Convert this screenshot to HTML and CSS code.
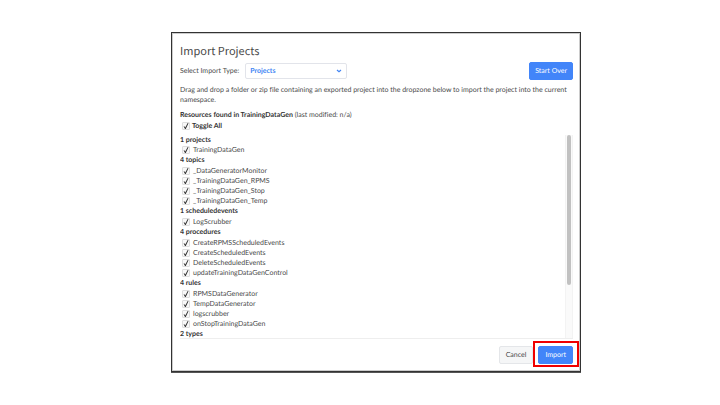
FILE: index.html
```html
<!DOCTYPE html>
<html lang="en">
<head>
<meta charset="utf-8">
<title>Import Projects</title>
<link rel="stylesheet" href="styles.css">
</head>
<body>
<main class="dialog">
  <h1 class="title">Import Projects</h1>
  <div class="toolbar">
    <label class="type-label" for="import-type">Select Import Type:</label>
    <div class="select-box">
      <select id="import-type" class="select"><option>Projects</option></select>
      <svg class="chevron" viewBox="0 0 6 4" aria-hidden="true"><path d="M1 1l2 1.8L5 1"/></svg>
    </div>
    <button class="button primary start-over" type="button">Start Over</button>
  </div>
  <p class="help">Drag and drop a folder or zip file containing an exported project into the dropzone below to import the project into the current namespace.</p>
  <p class="found"><strong>Resources found in TrainingDataGen</strong> (last modified: n/a)</p>
  <label class="item toggle-all"><input type="checkbox" checked>Toggle All</label>
  <div class="scroll-area">
    <div class="resources">
      <h2 class="group">1 projects</h2>
      <label class="item"><input type="checkbox" checked>TrainingDataGen</label>
      <h2 class="group">4 topics</h2>
      <label class="item"><input type="checkbox" checked>_DataGeneratorMonitor</label>
      <label class="item"><input type="checkbox" checked>_TrainingDataGen_RPMS</label>
      <label class="item"><input type="checkbox" checked>_TrainingDataGen_Stop</label>
      <label class="item"><input type="checkbox" checked>_TrainingDataGen_Temp</label>
      <h2 class="group">1 scheduledevents</h2>
      <label class="item"><input type="checkbox" checked>LogScrubber</label>
      <h2 class="group">4 procedures</h2>
      <label class="item"><input type="checkbox" checked>CreateRPMSScheduledEvents</label>
      <label class="item"><input type="checkbox" checked>CreateScheduledEvents</label>
      <label class="item"><input type="checkbox" checked>DeleteScheduledEvents</label>
      <label class="item"><input type="checkbox" checked>updateTrainingDataGenControl</label>
      <h2 class="group">4 rules</h2>
      <label class="item"><input type="checkbox" checked>RPMSDataGenerator</label>
      <label class="item"><input type="checkbox" checked>TempDataGenerator</label>
      <label class="item"><input type="checkbox" checked>logscrubber</label>
      <label class="item"><input type="checkbox" checked>onStopTrainingDataGen</label>
      <h2 class="group">2 types</h2>
    </div>
    <div class="track" aria-hidden="true"><div class="thumb"></div></div>
  </div>
  <footer class="actions">
    <button class="button cancel" type="button">Cancel</button>
    <span class="highlight"><button class="button primary" type="button">Import</button></span>
  </footer>
</main>
</body>
</html>
```
FILE: styles.css
```css
* {
  box-sizing: border-box;
}

body {
  margin: 0;
  padding: 32px 139px 32px 171px;
  background: #fff;
  color: #4a4a4a;
  font: 7px/10px Lato, "Noto Sans", sans-serif;
  font-variant-ligatures: none;
  text-rendering: geometricPrecision;
}

.dialog {
  display: flex;
  flex-direction: column;
  padding: 10px 7px 4px 8px;
  border: 1px solid #333;
  box-shadow: 0 1px 0 #555, inset 0 0 0 1px #ccc;
}

.title {
  margin: 0;
  font-family: "Noto Sans CJK SC", "Noto Sans", sans-serif;
  font-size: 11px;
  font-weight: 400;
  line-height: 16px;
}

.toolbar {
  display: flex;
  align-items: center;
  margin-top: 3px;
}

.type-label {
  margin-right: 6px;
}

.select-box {
  position: relative;
  width: 102px;
}

.select {
  appearance: none;
  display: block;
  width: 100%;
  height: 16px;
  padding: 0 4px;
  border: 1px solid #e2e4ea;
  border-radius: 2px;
  background: #fff;
  color: #4285f4;
  font: inherit;
  font-weight: 700;
  text-rendering: inherit;
}

.chevron {
  position: absolute;
  top: 6px;
  right: 5px;
  width: 6px;
  height: 4px;
  fill: none;
  stroke: #4285f4;
  stroke-width: 1.2;
  pointer-events: none;
}

.button {
  height: 18px;
  padding: 0 6px;
  border: 1px solid #e4e6e9;
  border-radius: 2px;
  background: #f5f6f7;
  color: #4a4a4a;
  font: inherit;
  text-rendering: inherit;
  white-space: nowrap;
}

.primary {
  border-color: #4285f9;
  background: #4285f9;
  color: #fff;
}

.start-over {
  margin-left: auto;
  padding: 0 5px;
}

.help,
.found {
  margin: 5px 0 0;
}

strong,
.group,
.toggle-all {
  color: #333;
  font-weight: 700;
}

.item {
  display: flex;
  align-items: center;
  gap: 3px;
  height: 10px;
  padding-left: 2px;
}

.toggle-all {
  gap: 2px;
  margin-top: 1px;
}

.item input {
  appearance: none;
  width: 8px;
  height: 8px;
  margin: 0;
  border: 1px solid #ddd;
  border-radius: 1px;
  background: #f8f8f8;
}

.item input:checked::before {
  content: "";
  display: block;
  width: 6px;
  height: 6px;
  background: #333;
  clip-path: polygon(10% 60%, 22% 54%, 38% 74%, 78% 0, 92% 6%, 46% 100%, 34% 100%);
}

.scroll-area {
  display: flex;
  height: 204px;
  margin-top: 4px;
  border-bottom: 1px solid #eee;
}

.resources {
  flex: 1;
  overflow-y: auto;
  scrollbar-width: none;
}

.track {
  width: 8px;
  padding: 0 1px;
  border: 1px solid #f3f3f3;
  border-width: 0 1px;
  background: #fafafa;
}

.thumb {
  height: 74%;
  border-radius: 2px;
  background: #c1c1c1;
}

.group {
  margin: 0;
  font-size: 7px;
  line-height: 11px;
}

.group:first-child {
  line-height: 10px;
}

.actions {
  display: flex;
  align-items: flex-start;
  justify-content: flex-end;
  margin-top: 2px;
}

.cancel {
  margin-top: 5px;
}

.highlight {
  display: flex;
  margin-right: -6px;
  padding: 3px 4px 1px 3px;
  border: 2px solid #f00000;
}
```
